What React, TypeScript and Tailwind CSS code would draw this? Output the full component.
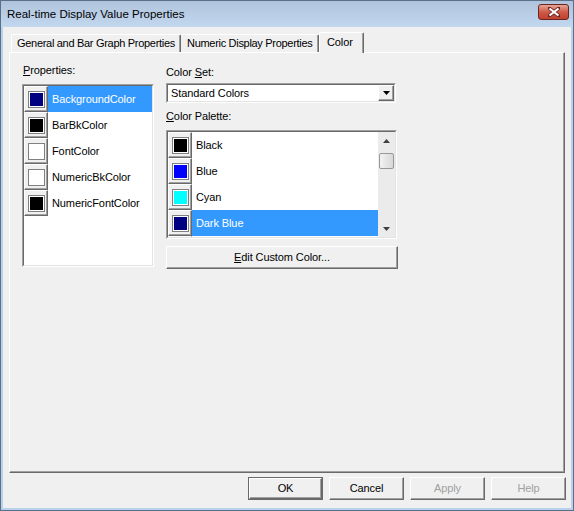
import React from "react"

const font = { fontFamily: '"Liberation Sans", Arial, sans-serif' }

const props = [
  { name: "BackgroundColor", color: "#000080", sel: true },
  { name: "BarBkColor", color: "#000000" },
  { name: "FontColor", color: "#ffffff" },
  { name: "NumericBkColor", color: "#ffffff" },
  { name: "NumericFontColor", color: "#000000" },
]

const palette = [
  { name: "Black", color: "#000000" },
  { name: "Blue", color: "#0000ff" },
  { name: "Cyan", color: "#00ffff" },
  { name: "Dark Blue", color: "#000080", sel: true },
  { name: "Dark Cyan", color: "#008080" },
]

function Swatch({ color }: { color: string }) {
  return (
    <div className="w-[24px] h-[26px] shrink-0 flex items-center justify-center bg-[#f0f0f0] border-t border-l border-t-white border-l-white border-r border-b border-r-[#696969] border-b-[#696969] shadow-[inset_-1px_-1px_#a0a0a0]">
      <div className="w-[17px] h-[17px] border border-[#808080] p-[1px] bg-white">
        <div className="w-full h-full" style={{ backgroundColor: color }} />
      </div>
    </div>
  )
}

function Row({ name, color, sel }: { name: string; color: string; sel?: boolean }) {
  return (
    <div className="flex h-[26px] shrink-0">
      <Swatch color={color} />
      <div className={"flex-1 flex items-center pl-[4px] " + (sel ? "bg-[#3399ff] text-white" : "text-black")}>
        {name}
      </div>
    </div>
  )
}

function Sunken({ className, children }: { className?: string; children: React.ReactNode }) {
  return (
    <div className={"border border-t-[#a0a0a0] border-l-[#a0a0a0] border-r-white border-b-white " + (className || "")}>
      <div className="w-full h-full border border-t-[#696969] border-l-[#696969] border-r-[#e3e3e3] border-b-[#e3e3e3] bg-white overflow-hidden">
        {children}
      </div>
    </div>
  )
}

function Button({ label, def, disabled }: { label: string; def?: boolean; disabled?: boolean }) {
  return (
    <div className={"w-[75px] h-[23px] " + (def ? "border border-[#696969]" : "")}>
      <div className="w-full h-full flex items-center justify-center bg-[#f0f0f0] border-t border-l border-t-white border-l-white border-r border-b border-r-[#696969] border-b-[#696969] shadow-[inset_-1px_-1px_#a0a0a0]">
        <span className={disabled ? "text-[#a0a0a0]" : "text-black"}>{label}</span>
      </div>
    </div>
  )
}

export default function App() {
  return (
    <div className="w-[574px] h-[511px] flex flex-col bg-[#b9d1ea] border border-[#5a6f88] text-[11px] leading-[13px] tracking-[-0.1px]" style={font}>
      {/* title bar */}
      <div className="h-[26px] shrink-0 flex items-center justify-between pl-[6px] pr-[4px] bg-gradient-to-b from-[#b0c3dc] to-[#c2d8ef]">
        <span className="text-[11.5px] tracking-normal text-black pt-[1px]">Real-time Display Value Properties</span>
        <div className="w-[31px] h-[16px] mt-[-5px] rounded-[3px] border border-[#6b2620] bg-gradient-to-b from-[#e6a597] via-[#cf5a48] to-[#c1402f] flex items-center justify-center">
          <svg width="12" height="10" viewBox="0 0 12 10">
            <path d="M1 1 L11 9 M11 1 L1 9" stroke="#6b2620" strokeWidth="3.6" strokeLinecap="square" />
            <path d="M1.5 1.5 L10.5 8.5 M10.5 1.5 L1.5 8.5" stroke="#ffffff" strokeWidth="2.2" />
          </svg>
        </div>
      </div>

      {/* client */}
      <div className="flex-1 mx-[2px] mb-[2px] bg-[#f0f0f0] flex flex-col">
        {/* tabs */}
        <div className="ml-[8px] mt-[5px] h-[20px] flex items-end relative z-10">
          <div className="w-[170px] h-[18px] flex items-center pl-[5px] rounded-t-[2px] border-t border-l border-t-white border-l-white border-r border-r-[#696969] shadow-[inset_-1px_0_#a0a0a0] whitespace-nowrap tracking-[-0.3px]">
            General and Bar Graph Properties
          </div>
          <div className="w-[138px] h-[18px] flex items-center pl-[6px] rounded-t-[2px] border-t border-t-white border-r border-r-[#696969] shadow-[inset_-1px_0_#a0a0a0] whitespace-nowrap tracking-[-0.3px]">
            Numeric Display Properties
          </div>
          <div className="w-[45px] h-[21px] mb-[-1px] bg-[#f0f0f0] flex items-start pt-[3px] pl-[7px] rounded-t-[2px] border-t border-l border-t-white border-l-white border-r border-r-[#696969] shadow-[inset_-1px_0_#a0a0a0]">
            Color
          </div>
        </div>

        {/* panel */}
        <div className="ml-[6px] w-[556px] h-[421px] bg-[#f0f0f0] border-t border-l border-t-white border-l-white border-r border-b border-r-[#696969] border-b-[#696969] shadow-[inset_-1px_-1px_#a0a0a0] pt-[11px] pl-[12px] flex gap-[12px]">
          <div className="w-[132px] flex flex-col">
            <div className="h-[13px] pl-[1px] mb-[7px]">
              <span className="underline">P</span>roperties:
            </div>
            <Sunken className="h-[183px]">
              <div className="flex flex-col">
                {props.map((p) => (
                  <Row key={p.name} {...p} />
                ))}
              </div>
            </Sunken>
          </div>

          <div className="w-[231px] flex flex-col pt-[2px]">
            <div className="h-[13px] mb-[4px]">
              Color <span className="underline">S</span>et:
            </div>
            <Sunken className="h-[20px] w-[230px]">
              <div className="flex h-full items-center">
                <span className="flex-1 pl-[3px]">Standard Colors</span>
                <div className="w-[16px] h-[16px] flex items-center justify-center bg-[#f0f0f0] border-t border-l border-t-white border-l-white border-r border-b border-r-[#696969] border-b-[#696969] shadow-[inset_-1px_-1px_#a0a0a0]">
                  <svg width="7" height="4" viewBox="0 0 7 4">
                    <path d="M0 0 H7 L3.5 4 Z" fill="#000" />
                  </svg>
                </div>
              </div>
            </Sunken>
            <div className="h-[13px] mt-[7px] mb-[7px]">
              <span className="underline">C</span>olor Palette:
            </div>
            <Sunken className="h-[109px]">
              <div className="flex h-full">
                <div className="flex-1 flex flex-col overflow-hidden">
                  {palette.map((p) => (
                    <Row key={p.name} {...p} />
                  ))}
                </div>
                <div className="w-[17px] h-full bg-[#ebebeb] flex flex-col items-center">
                  <div className="h-[17px] flex items-center justify-center">
                    <svg width="7" height="4" viewBox="0 0 7 4">
                      <path d="M0 4 H7 L3.5 0 Z" fill="#404040" />
                    </svg>
                  </div>
                  <div className="w-[15px] h-[16px] mt-[4px] rounded-[2px] border border-[#979797] bg-gradient-to-r from-[#f3f3f3] to-[#d8d8d8]" />
                  <div className="flex-1" />
                  <div className="h-[17px] flex items-center justify-center">
                    <svg width="7" height="4" viewBox="0 0 7 4">
                      <path d="M0 0 H7 L3.5 4 Z" fill="#404040" />
                    </svg>
                  </div>
                </div>
              </div>
            </Sunken>
            <div className="mt-[7px] w-[232px] h-[23px] flex items-center justify-center bg-[#f0f0f0] border-t border-l border-t-white border-l-white border-r border-b border-r-[#696969] border-b-[#696969] shadow-[inset_-1px_-1px_#a0a0a0]">
              <span>
                <span className="underline">E</span>dit Custom Color...
              </span>
            </div>
          </div>
        </div>

        {/* buttons */}
        <div className="flex justify-end gap-[6px] pr-[5px] mt-[4px]">
          <Button label="OK" def />
          <Button label="Cancel" />
          <Button label="Apply" disabled />
          <Button label="Help" disabled />
        </div>
      </div>
    </div>
  )
}
